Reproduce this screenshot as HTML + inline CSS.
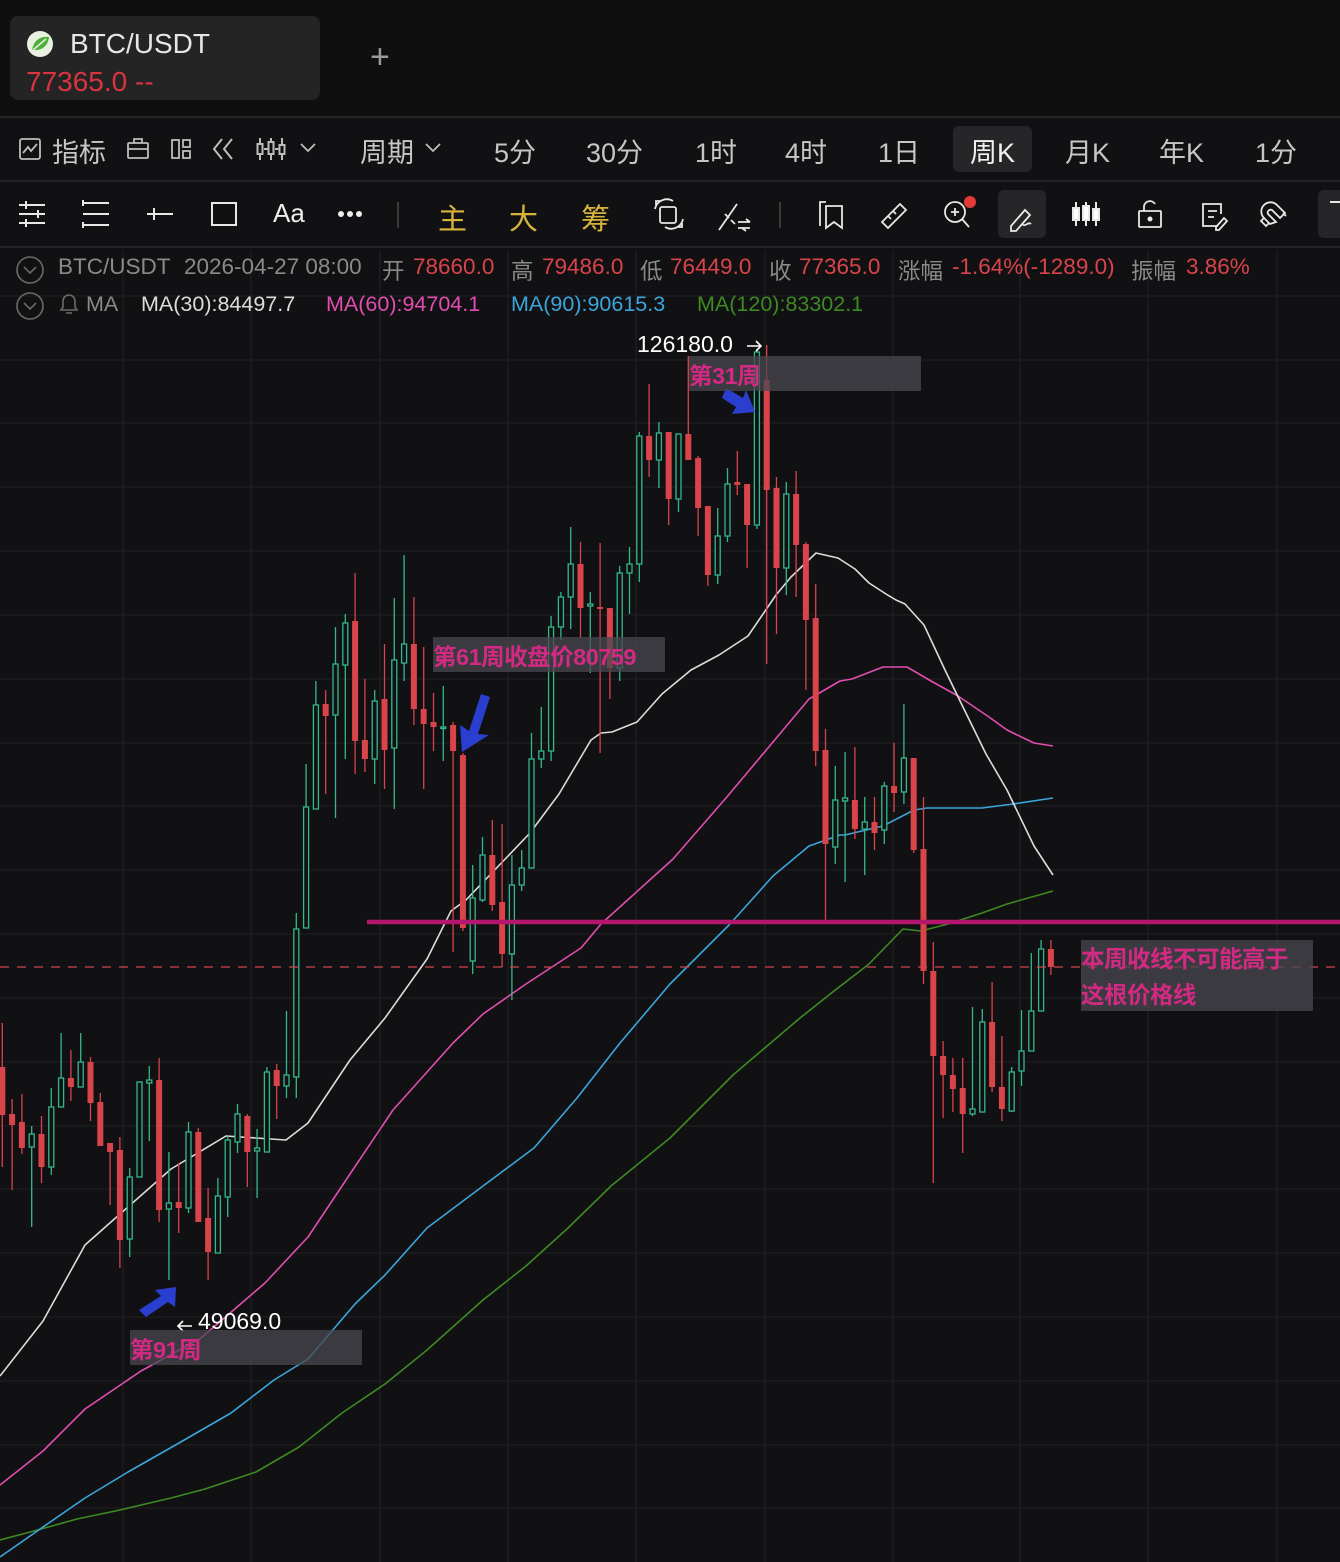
<!DOCTYPE html>
<html><head><meta charset="utf-8"><style>
*{margin:0;padding:0;box-sizing:border-box}
body{width:1340px;height:1562px;background:#111113;overflow:hidden;position:relative;font-family:"Liberation Sans","Noto Sans CJK SC",sans-serif;color:#c8c8c8}
.a{position:absolute;white-space:nowrap}
.t2{font-size:27px;color:#c6c6c6;top:131px}
.inf{font-size:21.5px;color:#8a8a8a}
.i1{font-size:22.5px;top:254px}
.r{color:#d9434a}
.ann{position:absolute;background:rgba(72,72,80,.75);}
.at{position:absolute;font-size:23.5px;font-weight:bold;color:#d22a82;white-space:nowrap;font-family:"Liberation Sans","Noto Sans CJK SC",sans-serif;letter-spacing:-0.5px}
</style></head><body>
<div class="a" style="left:0;top:0;width:1340px;height:117px;background:#0f0f10"></div>
<div class="a" style="left:10px;top:16px;width:310px;height:84px;background:#242425;border-radius:8px"></div>
<svg class="a" style="left:26px;top:30px" width="28" height="28" viewBox="0 0 28 28"><circle cx="14" cy="14" r="13" fill="#e8f0e0"/><path d="M6 20 C8 10 14 6 23 7 C22 16 16 21 6 20Z" fill="#4caf3a"/><path d="M7 20 L20 9" stroke="#e8f0e0" stroke-width="1.5"/></svg>
<div class="a" style="left:70px;top:28px;font-size:28px;color:#e6e6e6">BTC/USDT</div>
<div class="a" style="left:26px;top:66px;font-size:28px;color:#d9343f">77365.0 --</div>
<div class="a" style="left:370px;top:38px;font-size:34px;color:#9a9a9a;font-weight:200">+</div>
<div class="a" style="left:0;top:116px;width:1340px;height:2px;background:#242426"></div>
<div class="a" style="left:0;top:180px;width:1340px;height:2px;background:#242426"></div>
<div class="a" style="left:0;top:246px;width:1340px;height:2px;background:#242426"></div>
<!-- row 2 -->
<svg class="a" style="left:18px;top:137px" width="24" height="24" viewBox="0 0 24 24" fill="none" stroke="#bdbdbd" stroke-width="1.8"><rect x="2" y="2" width="20" height="20" rx="2"/><path d="M5 16 L10 10 L13 14 L19 7"/></svg>
<div class="a t2" style="left:52px">指标</div>
<svg class="a" style="left:126px;top:137px" width="24" height="24" viewBox="0 0 24 24" fill="none" stroke="#bdbdbd" stroke-width="1.8"><rect x="2" y="6" width="20" height="15" rx="1"/><path d="M8 6V2h8v4M2 12h20"/></svg>
<svg class="a" style="left:170px;top:138px" width="22" height="22" viewBox="0 0 22 22" fill="none" stroke="#bdbdbd" stroke-width="1.8"><rect x="2" y="2" width="7" height="18"/><rect x="13" y="2" width="7" height="7"/><rect x="13" y="13" width="7" height="7"/></svg>
<svg class="a" style="left:210px;top:136px" width="26" height="26" viewBox="0 0 26 26" fill="none" stroke="#bdbdbd" stroke-width="2"><path d="M12 3 L4 13 L12 23 M22 3 L14 13 L22 23"/></svg>
<svg class="a" style="left:256px;top:136px" width="30" height="26" viewBox="0 0 30 26" fill="none" stroke="#bdbdbd" stroke-width="2"><path d="M4 2v22M15 2v22M26 2v22"/><rect x="1.5" y="8" width="5" height="10" fill="#0f0f10"/><rect x="12.5" y="6" width="5" height="12" fill="#0f0f10"/><rect x="23.5" y="9" width="5" height="9" fill="#0f0f10"/><path d="M8 13h4M19 13h4"/></svg>
<svg class="a" style="left:299px;top:142px" width="18" height="12" viewBox="0 0 18 12" fill="none" stroke="#bdbdbd" stroke-width="1.8"><path d="M2 2l7 7 7-7"/></svg>
<div class="a t2" style="left:360px">周期</div>
<svg class="a" style="left:424px;top:142px" width="18" height="12" viewBox="0 0 18 12" fill="none" stroke="#bdbdbd" stroke-width="1.8"><path d="M2 2l7 7 7-7"/></svg>
<div class="a t2" style="left:494px">5分</div>
<div class="a t2" style="left:586px">30分</div>
<div class="a t2" style="left:695px">1时</div>
<div class="a t2" style="left:785px">4时</div>
<div class="a t2" style="left:878px">1日</div>
<div class="a" style="left:953px;top:126px;width:79px;height:46px;background:#262628;border-radius:6px"></div>
<div class="a t2" style="left:970px;color:#f2f2f2">周K</div>
<div class="a t2" style="left:1065px">月K</div>
<div class="a t2" style="left:1159px">年K</div>
<div class="a t2" style="left:1255px">1分</div>
<!-- row 3 toolbar -->
<svg class="a" style="left:0;top:182px" width="1340" height="64" viewBox="0 182 1340 64" fill="none" stroke="#e8e8e8" stroke-width="2">
<path d="M19 205h26M19 214h26M19 223h26M26 201v8M38 210v8M26 219v8"/>
<path d="M83 203h26M83 214h26M83 225h26M83 200v6M83 222v6"/>
<path d="M147 214h26M154 208v12"/>
<rect x="212" y="203" width="24" height="22"/>
<rect x="998" y="190" width="48" height="48" rx="6" fill="#262628" stroke="none"/>
<rect x="1318" y="190" width="30" height="48" rx="6" fill="#262628" stroke="none"/>
<path d="M398 202v26M780 202v26" stroke="#3a3a3a"/>
<path d="M655 209a12 12 0 0 1 18-8M683 219a12 12 0 0 1-18 8M656 205v-4h4M682 223v4h-4" stroke-width="1.8"/><rect x="660" y="207" width="16" height="16" rx="2" stroke-width="1.8"/>
<path d="M719 230l18-26M725 214l4 4M731 220l4 4M738 222h12M738 228h12M746 219l4 3M746 231l-4-3" stroke-width="1.8"/>
<path d="M820 226v-24h6M826 206h16v22l-8-6-8 6z" stroke-width="1.8"/>
<path d="M882 222l18-18 6 6-18 18z M888 216l3 3M893 211l3 3" stroke-width="1.8"/>
<circle cx="955" cy="212" r="10" stroke-width="1.8"/><path d="M962 219l7 8M951 212h8M955 208v8" stroke-width="1.8"/><circle cx="970" cy="202" r="6" fill="#e53a3a" stroke="none"/>
<path d="M1011 226l14-16 5 5-14 16h-5z M1022 224c3 4 6-3 9 0" stroke-width="1.8"/>
<path d="M1076 202v24M1086 202v24M1096 202v24" stroke-width="2"/><rect x="1073" y="208" width="6" height="12" fill="#fff"/><rect x="1083" y="206" width="6" height="14" fill="#fff"/><rect x="1093" y="209" width="6" height="11" fill="#fff"/>
<rect x="1139" y="211" width="22" height="16" rx="1" stroke-width="1.8"/><path d="M1144 211v-5a6 6 0 0 1 11-2" stroke-width="1.8"/><circle cx="1150" cy="219" r="1.5" fill="#fff"/>
<path d="M1218 226h-15v-22h18v10M1208 211h9M1208 217h6M1216 227l8-9 3 3-8 9h-3z" stroke-width="1.8"/>
<path d="M1270 224l-6-6a9 9 0 0 1 13-13l8 8-5 5-8-8a3 3 0 0 0-4 4l8 8zM1264 218l-3 3 5 5 3-3M1283 213l3 3" stroke-width="1.8"/>
<path d="M1330 202h10" stroke-width="2"/>
<circle cx="341" cy="214" r="3" fill="#eee" stroke="none"/><circle cx="350" cy="214" r="3" fill="#eee" stroke="none"/><circle cx="359" cy="214" r="3" fill="#eee" stroke="none"/>
</svg>
<div class="a" style="left:273px;top:198px;font-size:26px;color:#eee">Aa</div>
<div class="a" style="left:438px;top:196px;font-size:29px;color:#d8b43c">主</div>
<div class="a" style="left:509px;top:196px;font-size:29px;color:#d8b43c">大</div>
<div class="a" style="left:581px;top:196px;font-size:29px;color:#d8b43c">筹</div>

<!-- chart -->
<svg class="a" style="left:0;top:0" width="1340" height="1562" viewBox="0 0 1340 1562">
<g stroke="#1f1f22" stroke-width="1.3">
<path d="M0 296H1340M0 360H1340M0 423H1340M0 487H1340M0 551H1340M0 615H1340M0 679H1340M0 743H1340M0 806H1340M0 870H1340M0 934H1340M0 998H1340M0 1062H1340M0 1126H1340M0 1189H1340M0 1253H1340M0 1317H1340M0 1381H1340M0 1445H1340M0 1508H1340"/>
<path d="M123 250V1562M251 250V1562M380 250V1562M508 250V1562M636 250V1562M765 250V1562M893 250V1562M1020 250V1562M1148 250V1562M1277 250V1562"/>
</g>
<g fill="none" stroke-width="1.6" stroke-linejoin="round">
<polyline stroke="#3d8a22" points="0,1540 34,1531 77,1519 120,1510 171,1498 205,1489 256,1472 299,1447 342,1413 385,1384 427,1350 483,1300 526,1266 568,1228 611,1186 670,1138 733,1075 800,1018 834,991 869,964 903,929 921,931 948,924 982,913 1007,904 1053,891"/>
<polyline stroke="#3aa6dc" points="0,1557 43,1527 85,1498 128,1472 179,1443 231,1413 274,1380 308,1359 355,1304 385,1275 427,1228 483,1186 534,1148 577,1098 620,1043 670,984 730,924 773,876 809,846 840,835 845,835 883,826 914,810 927,808 982,808 1013,804 1053,798"/>
<polyline stroke="#e24db2" points="0,1485 43,1451 85,1409 141,1371 201,1338 265,1283 308,1237 350,1174 393,1110 453,1043 483,1014 526,984 581,948 601,924 673,859 726,798 773,742 809,699 840,681 852,679 883,667 907,667 931,681 958,696 989,717 1007,730 1034,743 1053,746"/>
<polyline stroke="#dcdcdc" points="0,1376 43,1321 85,1245 120,1214 171,1169 226,1136 286,1140 308,1123 350,1060 385,1018 427,959 451,911 466,900 530,833 559,794 591,740 601,733 612,732 637,722 662,694 691,670 719,655 748,636 776,595 791,577 816,553 838,558 855,569 869,583 886,594 896,600 905,604 924,625 945,670 962,705 986,754 1007,790 1034,846 1053,875"/>
</g>
<g fill="#d9434a" stroke="#d9434a" stroke-width="1.3">
<path fill="none" d="M2.3 1023V1167M12.1 1099V1190M21.9 1094V1154M41.5 1116V1183M70.9 1050V1101M90.5 1057V1121M100.3 1093V1146M110.1 1143V1205M119.9 1137V1268M159.1 1058V1222M178.7 1163V1233M198.3 1128V1222M208.1 1188V1280M247.3 1114V1187M276.7 1064V1119M325.7 690V794M355.1 573V774M364.9 679V772M384.5 644V789M413.9 597V725M423.7 647V789M433.5 693V751M453.1 722V952M462.9 753V931M492.3 820V911M502.1 824V967M580.5 542V638M600.1 543V753M609.9 608V699M649.1 384V477M668.7 432V525M688.3 356V460M698.1 456V536M707.9 506V586M737.3 451V495M747.1 484V568M766.7 345V664M776.5 477V634M796.1 471V597M805.9 542V690M815.7 584V766M825.5 729V920M854.9 747V839M874.5 797V850M894.1 743V812M913.7 758V853M923.5 797V984M933.3 942V1183M943.1 1041V1118M952.9 1058V1112M962.7 1058V1153M992.1 982V1092M1001.9 1036V1121M1050.9 940V975"/>
<g stroke="none">
<rect x="-0.7" y="1067" width="6" height="48"/><rect x="9.1" y="1114" width="6" height="11"/><rect x="18.9" y="1122" width="6" height="26"/><rect x="38.5" y="1134" width="6" height="33"/><rect x="67.9" y="1078" width="6" height="9"/><rect x="87.5" y="1062" width="6" height="41"/><rect x="97.3" y="1102" width="6" height="44"/><rect x="107.1" y="1143" width="6" height="9"/><rect x="116.9" y="1150" width="6" height="90"/><rect x="156.1" y="1080" width="6" height="130"/><rect x="175.7" y="1202" width="6" height="6"/><rect x="195.3" y="1132" width="6" height="90"/><rect x="205.1" y="1218" width="6" height="34"/><rect x="244.3" y="1116" width="6" height="36"/><rect x="273.7" y="1070" width="6" height="16"/>
<rect x="322.7" y="704" width="6" height="12"/><rect x="352.1" y="621" width="6" height="120"/><rect x="361.9" y="740" width="6" height="19"/><rect x="381.5" y="699" width="6" height="51"/><rect x="410.9" y="644" width="6" height="65"/><rect x="420.7" y="709" width="6" height="15"/><rect x="430.5" y="722" width="6" height="5"/><rect x="450.1" y="725" width="6" height="26"/><rect x="459.9" y="755" width="6" height="173"/><rect x="489.3" y="855" width="6" height="50"/><rect x="499.1" y="902" width="6" height="52"/>
<rect x="577.5" y="564" width="6" height="44"/><rect x="597.1" y="607" width="6" height="2"/><rect x="606.9" y="608" width="6" height="60"/><rect x="646.1" y="436" width="6" height="24"/><rect x="665.7" y="432" width="6" height="67"/><rect x="685.3" y="434" width="6" height="26"/><rect x="695.1" y="458" width="6" height="50"/><rect x="704.9" y="506" width="6" height="69"/><rect x="734.3" y="482" width="6" height="3"/><rect x="744.1" y="484" width="6" height="41"/><rect x="763.7" y="380" width="6" height="110"/><rect x="773.5" y="488" width="6" height="80"/><rect x="793.1" y="494" width="6" height="51"/><rect x="802.9" y="544" width="6" height="76"/><rect x="812.7" y="618" width="6" height="133"/><rect x="822.5" y="750" width="6" height="94"/>
<rect x="851.9" y="800" width="6" height="29"/><rect x="871.5" y="822" width="6" height="11"/><rect x="891.1" y="786" width="6" height="7"/><rect x="910.7" y="758" width="6" height="92"/><rect x="920.5" y="849" width="6" height="122"/><rect x="930.3" y="971" width="6" height="85"/><rect x="940.1" y="1056" width="6" height="19"/><rect x="949.9" y="1075" width="6" height="14"/><rect x="959.7" y="1088" width="6" height="26"/><rect x="989.1" y="1022" width="6" height="65"/><rect x="998.9" y="1087" width="6" height="22"/><rect x="1047.9" y="949" width="6" height="18"/>
</g></g>
<g fill="none" stroke="#33b88c" stroke-width="1.3">
<path d="M31.7 1126V1227M51.3 1088V1175M61.1 1033V1107M80.7 1033V1087M129.7 1168V1257M139.5 1082V1177M149.3 1066V1141M168.9 1152V1280M188.5 1122V1213M217.9 1178V1253M227.7 1135V1217M237.5 1104V1153M257.1 1129V1198M266.9 1067V1152M286.5 1011V1098M296.3 913V1098M306.1 764V928M315.9 681V809M335.5 627V818M345.3 614V759M374.7 690V784M394.3 598V809M404.1 555V681M443.3 686V761M472.7 865V974M482.5 837V902M511.9 855V1000M521.7 850V891M531.5 733V868M541.3 707V768M551.1 616V761M560.9 592V640M570.7 527V629M590.3 592V673M619.7 566V681M629.5 547V614M639.3 432V582M658.9 422V488M678.5 434V512M717.7 508V584M727.5 468V542M756.9 350V529M786.3 482V595M835.3 766V864M845.1 752V882M864.7 797V875M884.3 782V844M903.9 704V804M972.5 1007V1116M982.3 1009V1112M1011.7 1067V1112M1021.5 1010V1086M1031.3 953V1051M1041.1 940V1011"/>
<g fill="#111113">
<rect x="29.2" y="1134" width="5" height="13"/><rect x="48.8" y="1107" width="5" height="60"/><rect x="58.6" y="1078" width="5" height="29"/><rect x="78.2" y="1062" width="5" height="25"/><rect x="127.2" y="1177" width="5" height="62"/><rect x="137" y="1082" width="5" height="95"/><rect x="146.8" y="1080" width="5" height="3"/><rect x="166.4" y="1203" width="5" height="6"/><rect x="186" y="1132" width="5" height="76"/><rect x="215.4" y="1196" width="5" height="57"/><rect x="225.2" y="1140" width="5" height="57"/><rect x="235" y="1114" width="5" height="28"/><rect x="254.6" y="1148" width="5" height="3"/><rect x="264.4" y="1072" width="5" height="80"/><rect x="284" y="1075" width="5" height="11"/>
<rect x="293.8" y="929" width="5" height="148"/><rect x="303.6" y="807" width="5" height="121"/><rect x="313.4" y="705" width="5" height="104"/><rect x="333" y="664" width="5" height="51"/><rect x="342.8" y="623" width="5" height="42"/><rect x="372.2" y="701" width="5" height="58"/><rect x="391.8" y="660" width="5" height="88"/><rect x="401.6" y="644" width="5" height="19"/><rect x="440.8" y="727" width="5" height="1.5"/><rect x="470.2" y="898" width="5" height="63"/><rect x="480" y="855" width="5" height="45"/><rect x="509.4" y="885" width="5" height="69"/><rect x="519.2" y="868" width="5" height="17"/><rect x="529" y="759" width="5" height="109"/><rect x="538.8" y="751" width="5" height="8"/><rect x="548.6" y="627" width="5" height="124"/><rect x="558.4" y="597" width="5" height="30"/><rect x="568.2" y="564" width="5" height="33"/><rect x="587.8" y="604" width="5" height="2"/><rect x="617.2" y="573" width="5" height="95"/><rect x="627" y="564" width="5" height="9"/><rect x="636.8" y="436" width="5" height="128"/><rect x="656.4" y="433" width="5" height="27"/><rect x="676" y="434" width="5" height="65"/><rect x="715.2" y="536" width="5" height="39"/><rect x="725" y="484" width="5" height="52"/><rect x="754.4" y="352" width="5" height="173"/><rect x="783.8" y="494" width="5" height="74"/>
<rect x="832.8" y="800" width="5" height="47"/><rect x="842.6" y="798" width="5" height="3"/><rect x="862.2" y="822" width="5" height="7"/><rect x="881.8" y="786" width="5" height="44"/><rect x="901.4" y="758" width="5" height="34"/><rect x="970" y="1109" width="5" height="5"/><rect x="979.8" y="1022" width="5" height="90"/><rect x="1009.2" y="1072" width="5" height="39"/><rect x="1019" y="1051" width="5" height="20"/><rect x="1028.8" y="1011" width="5" height="40"/><rect x="1038.6" y="949" width="5" height="62"/>
</g></g>
<path d="M0 967H1340" stroke="#d0454f" stroke-width="1.3" stroke-dasharray="9 8"/>
<path d="M367 922H1340" stroke="#b3156f" stroke-width="4.5"/>
<g fill="#2a3fcf">
<path d="M722 398l4-10 17 10 3-8 9 22-23 2 4-7z"/>
<path d="M462 752l-2-27 9 6 12-37 9 3-12 37 11 1z"/>
<path d="M176 1287l-1 20-7-5-22 15-7-7 22-14-6-6z"/>
</g>
<path d="M747 346h14M756 341l5 5-5 5" stroke="#fff" stroke-width="1.6" fill="none"/>
<path d="M178 1326h14M183 1321l-5 5 5 5" stroke="#fff" stroke-width="1.6" fill="none"/>
</svg>
<div class="a" style="left:637px;top:331px;font-size:23px;color:#fff">126180.0</div>
<div class="a" style="left:198px;top:1308px;font-size:23px;color:#fff">49069.0</div>
<div class="ann" style="left:689px;top:356px;width:232px;height:35px"></div>
<div class="at" style="left:689px;top:357px">第31周</div>
<div class="ann" style="left:433px;top:637px;width:232px;height:35px"></div>
<div class="at" style="left:433px;top:638px">第61周收盘价80759</div>
<div class="ann" style="left:130px;top:1330px;width:232px;height:35px"></div>
<div class="at" style="left:130px;top:1331px">第91周</div>
<div class="ann" style="left:1081px;top:940px;width:232px;height:71px"></div>
<div class="at" style="left:1081px;top:940px">本周收线不可能高于</div>
<div class="at" style="left:1081px;top:976px">这根价格线</div>
<svg class="a" style="left:15px;top:255px" width="32" height="68" viewBox="0 0 32 68" fill="none" stroke="#6a6a6a" stroke-width="1.6"><circle cx="15" cy="15" r="13"/><path d="M9 12l6 6 6-6"/><circle cx="15" cy="51" r="13"/><path d="M9 48l6 6 6-6"/></svg>
<svg class="a" style="left:56px;top:291px" width="26" height="26" viewBox="0 0 26 26" fill="none" stroke="#6a6a6a" stroke-width="1.6"><path d="M5 19h16l-2-3v-6a6 6 0 0 0-12 0v6z M10 22h6"/></svg>
<div class="a inf i1" style="left:58px">BTC/USDT</div>
<div class="a inf i1" style="left:184px">2026-04-27 08:00</div>
<div class="a inf i1" style="left:382px">开</div><div class="a inf i1 r" style="left:413px">78660.0</div>
<div class="a inf i1" style="left:511px">高</div><div class="a inf i1 r" style="left:542px">79486.0</div>
<div class="a inf i1" style="left:640px">低</div><div class="a inf i1 r" style="left:670px">76449.0</div>
<div class="a inf i1" style="left:769px">收</div><div class="a inf i1 r" style="left:799px">77365.0</div>
<div class="a inf i1" style="left:898px">涨幅</div><div class="a inf i1 r" style="left:952px">-1.64%(-1289.0)</div>
<div class="a inf i1" style="left:1131px">振幅</div><div class="a inf i1 r" style="left:1186px">3.86%</div>
<div class="a inf" style="left:86px;top:292px">MA</div>
<div class="a inf" style="left:141px;top:292px;color:#dcdcdc">MA(30):84497.7</div>
<div class="a inf" style="left:326px;top:292px;color:#e24db2">MA(60):94704.1</div>
<div class="a inf" style="left:511px;top:292px;color:#3aa6dc">MA(90):90615.3</div>
<div class="a inf" style="left:697px;top:292px;color:#3d8a22">MA(120):83302.1</div>
</body></html>
